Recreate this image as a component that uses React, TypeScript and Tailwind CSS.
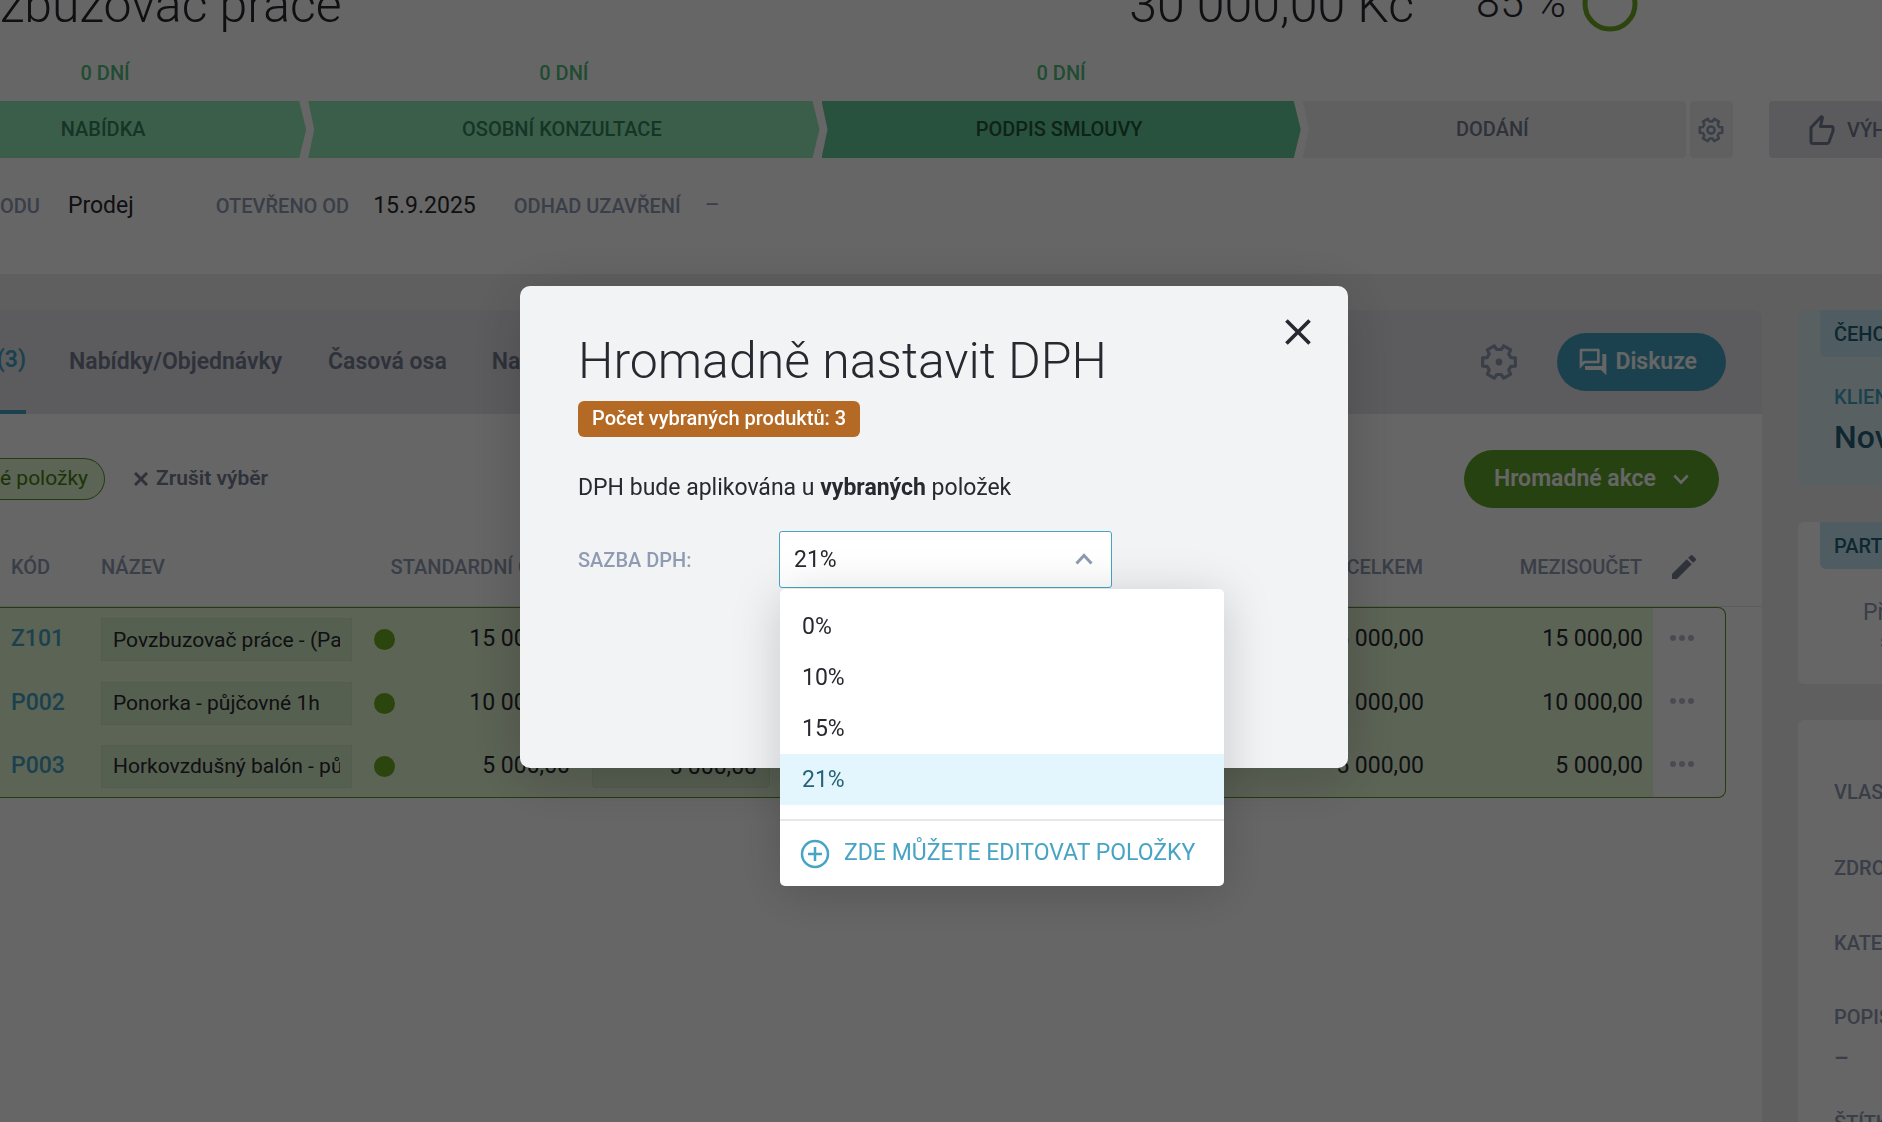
import { MdClose, MdEdit, MdOutlineForum } from "react-icons/md";
import { ReactNode } from "react";

type Product = { code: string; name: string; price: string };

const products: Product[] = [
  { code: "Z101", name: "Povzbuzovač práce - (Papír)", price: "15 000,00" },
  { code: "P002", name: "Ponorka - půjčovné 1h", price: "10 000,00" },
  { code: "P003", name: "Horkovzdušný balón - půjčovné", price: "5 000,00" },
];

const rates = ["0%", "10%", "15%", "21%"];

const gearPoints = [0, 60, 120, 180, 240, 300]
  .flatMap((tooth) =>
    [[12, -20], [16, -14], [16, 14], [12, 20]].map(([r, turn]) => {
      const a = ((tooth + turn) * Math.PI) / 180;
      return `${(18 + r * Math.cos(a)).toFixed(2)},${(18 + r * Math.sin(a)).toFixed(2)}`;
    }),
  )
  .join(" ");

function Gear({ className, dot }: { className: string; dot?: boolean }) {
  return (
    <svg viewBox="0 0 36 36" className={className} fill="none" stroke="currentColor" strokeWidth={dot ? 3 : 3.5} strokeLinejoin="round" aria-hidden="true">
      <polygon points={gearPoints} />
      {dot ? <circle cx="18" cy="18" r="3.2" fill="currentColor" stroke="none" /> : <circle cx="18" cy="18" r="5" />}
    </svg>
  );
}

function ThumbUp() {
  return (
    <svg viewBox="0 0 26 32" className="h-8 w-[26px] shrink-0" fill="none" stroke="currentColor" strokeWidth="3" strokeLinejoin="round" aria-hidden="true">
      <path d="M2 13.500 12.500 2.500l1 1-2 9H22.500q1.500 0 1.500 1.500v3l-4 11q-.6 1.500-2 1.500H4q-2 0-2-2z" />
    </svg>
  );
}

function Chevron({ up, className }: { up?: boolean; className: string }) {
  return (
    <svg viewBox="0 0 18 12" className={className} fill="none" stroke="currentColor" strokeWidth="3" aria-hidden="true">
      <path d={up ? "M1.500 10.500 9 2.500l7.500 8" : "M1.500 1.500 9 9.500l7.500-8"} />
    </svg>
  );
}

function Header() {
  return (
    <header className="h-[274px] shrink-0 bg-white">
      <div className="-mt-9 flex h-[88px] items-start text-[#282830]">
        <h1 className="flex-1 pt-[7px] text-[50px] leading-[68px] font-light">zbuzovač práce</h1>
        <div className="flex items-start pr-[244px]">
          <span className="pt-[7px] text-[50px] leading-[68px] font-light">30 000,00 Kč</span>
          <span className="ml-[62px] pt-1 text-[43px] leading-[68px] font-light">85 %</span>
          <svg viewBox="0 0 56 56" className="mt-3 ml-4 size-14" fill="none" stroke="#6fab22" strokeWidth="5" aria-hidden="true">
            <circle cx="28" cy="28" r="25" />
          </svg>
        </div>
      </div>
      <nav className="-ml-24 flex" aria-label="Fáze">
        <Stage days="0 DNÍ" label="NABÍDKA" grow="grow-[402]" color="bg-[#93eabb] text-[#39845c]" shape="[clip-path:polygon(0_0,calc(100%-7px)_0,100%_50%,calc(100%-7px)_100%,0_100%)]" />
        <Stage days="0 DNÍ" label="OSOBNÍ KONZULTACE" grow="grow-[511]" color="bg-[#93eabb] text-[#39845c]" shape="[clip-path:polygon(0_0,calc(100%-7px)_0,100%_50%,calc(100%-7px)_100%,0_100%,6px_50%)]" />
        <Stage days="0 DNÍ" label="PODPIS SMLOUVY" grow="grow-[479]" color="bg-[#67cd9b] text-[#23573c]" shape="[clip-path:polygon(0_0,calc(100%-7px)_0,100%_50%,calc(100%-7px)_100%,0_100%,6px_50%)]" />
        <Stage label="DODÁNÍ" grow="grow-[383]" color="bg-[#f0f0f0] text-[#757d93] rounded-r" shape="[clip-path:polygon(0_0,100%_0,100%_100%,0_100%,6px_50%)]" />
        <button aria-label="Nastavení fází" className="mt-[49px] ml-[2px] flex h-[57px] w-[43px] items-center justify-center rounded bg-[#f0f0f0] text-[#8f9bb3]">
          <Gear className="size-[26px]" />
        </button>
        <button className="mt-[49px] ml-9 flex h-[57px] w-[113px] items-center gap-3 overflow-hidden rounded-l bg-[#e3e4ec] pl-10 text-xl font-medium whitespace-nowrap text-[#757d93]">
          <ThumbUp />
          VÝHRA
        </button>
      </nav>
      <dl className="flex items-center pt-8 leading-8">
        <dt className="text-xl font-medium text-[#8f9bb3]">ODU</dt>
        <dd className="ml-7 text-[23px] text-[#282830]">Prodej</dd>
        <dt className="ml-[82px] text-xl font-medium text-[#8f9bb3]">OTEVŘENO OD</dt>
        <dd className="ml-6 text-[23px] text-[#282830]">15.9.2025</dd>
        <dt className="ml-[38px] text-xl font-medium text-[#8f9bb3]">ODHAD UZAVŘENÍ</dt>
        <dd className="ml-6 text-[23px] text-[#8f9bb3]">–</dd>
      </dl>
    </header>
  );
}

function Stage({ days, label, grow, color, shape }: { days?: string; label: string; grow: string; color: string; shape: string }) {
  return (
    <div className={`mr-[2px] flex basis-0 flex-col text-center text-xl font-medium ${grow}`}>
      <span className="h-[49px] pt-[7px] leading-7 text-[#52bd80]">{days}</span>
      <button className={`h-[57px] pr-1 pb-0.5 ${color} ${shape}`}>{label}</button>
    </div>
  );
}

function Tabs() {
  return (
    <div className="flex h-[104px] items-center rounded-tr-md bg-[#e6e6ec] pr-9 text-[23px] font-semibold text-[#757d93]">
      <a href="#produkty" className="flex h-full w-[26px] items-center justify-end border-b-4 border-[#47a4c4] text-[#47a4c4]">(3)</a>
      <a href="#nabidky" className="ml-[43px]">Nabídky/Objednávky</a>
      <a href="#osa" className="ml-[46px]">Časová osa</a>
      <a href="#nastaveni" className="ml-[45px]">Nastavení</a>
      <button aria-label="Nastavení" className="ml-auto text-[#8f9bb3]">
        <Gear className="size-[38px]" dot />
      </button>
      <button className="ml-[39px] flex h-[58px] items-center gap-1.5 rounded-full bg-[#47a4c4] pr-[29px] pl-5 text-white">
        <MdOutlineForum className="size-8" />
        Diskuze
      </button>
    </div>
  );
}

function Products() {
  return (
    <table className="mt-6 w-full table-fixed border-separate border-spacing-0 text-[23px] text-[#282830]">
      <colgroup>
        <col className="w-[101px]" />
        <col className="w-[251px]" />
        <col className="w-[68px]" />
        <col className="w-[161px]" />
        <col className="w-[200px]" />
        <col />
        <col className="w-[219px]" />
        <col className="w-[73px]" />
        <col className="w-[36px]" />
      </colgroup>
      <thead>
        <tr className="h-[75px] text-left text-xl text-[#8f9bb3] [&>th]:border-b [&>th]:border-[#e6e6ec] [&>th]:p-0 [&>th]:pb-1 [&>th]:font-medium">
          <th className="pl-[11px]!">KÓD</th>
          <th>NÁZEV</th>
          <th colSpan={2} className="pr-[11px]! text-right">STANDARDNÍ CENA</th>
          <th />
          <th className="pr-[11px]! text-right">CELKEM</th>
          <th className="pr-[11px]! text-right">MEZISOUČET</th>
          <th className="pl-[15px]! text-[#757d93]">
            <button aria-label="Upravit sloupce" className="block"><MdEdit className="size-8" /></button>
          </th>
          <th />
        </tr>
      </thead>
      <tbody>
        {products.map((p, i) => {
          const edge = i === 0 ? "border-t border-[#5a9628]" : i === products.length - 1 ? "border-b border-[#5a9628]" : "border-[#5a9628]";
          const corner = i === 0 ? "rounded-tr-lg" : i === products.length - 1 ? "rounded-br-lg" : "";
          return (
            <tr key={p.code} className="h-16 last:h-[63px] [&>td]:p-0">
              <td className={`bg-[#e6f9d7] pl-[11px]! font-medium text-[#47a4c4] ${edge}`}>
                <a href={`#${p.code}`}>{p.code}</a>
              </td>
              <td className={`bg-[#e6f9d7] ${edge}`}>
                <input aria-label={`Název ${p.code}`} defaultValue={p.name} className="block h-[43px] w-full border border-[#cfe6c4] bg-[#d6efc8] px-[11px] text-[21px]" />
              </td>
              <td className={`bg-[#e6f9d7] pl-[22px]! ${edge}`}>
                <span className="block size-[21px] rounded-full bg-[#6fab22]" />
              </td>
              <td className={`bg-[#e6f9d7] pr-[11px]! text-right ${edge}`}>{p.price}</td>
              <td className={`bg-[#e6f9d7] px-[11px]! ${edge}`}>
                <input aria-label={`Cena ${p.code}`} defaultValue={p.price} className="block h-[43px] w-full rounded-sm border border-[#cfe6c4] bg-[#d6efc8] px-3 text-right" />
              </td>
              <td className={`bg-[#e6f9d7] pr-2.5! text-right ${edge}`}>{p.price}</td>
              <td className={`bg-[#e6f9d7] pr-2.5! text-right ${edge}`}>{p.price}</td>
              <td className={`border-r pl-[17px]! ${edge} ${corner}`}>
                <button aria-label={`Akce ${p.code}`} className="flex gap-[3px] pb-1">
                  <Dot /><Dot /><Dot />
                </button>
              </td>
              <td />
            </tr>
          );
        })}
      </tbody>
    </table>
  );
}

function Dot() {
  return <span className="size-1.5 rounded-full bg-[#b9bccb]" />;
}

function Badge({ children }: { children: ReactNode }) {
  return (
    <h2 className="ml-[22px] flex h-[47px] items-center rounded-bl-md bg-[#c6e8f4] pl-3.5 text-xl font-medium text-[#266378]">{children}</h2>
  );
}

function Sidebar() {
  return (
    <aside className="flex w-[84px] shrink-0 flex-col gap-9 overflow-hidden whitespace-nowrap">
      <section className="h-[176px] rounded-l-md bg-[#dff0f6]">
        <Badge>ČEHO</Badge>
        <p className="pt-[26px] pl-9 text-xl leading-7 font-medium text-[#47a4c4]">KLIEN</p>
        <p className="pt-2.5 pl-9 text-[32px] leading-8 font-medium text-[#266378]">Nov</p>
      </section>
      <section className="h-[162px] rounded-l-md bg-white text-[#8f9bb3]">
        <Badge>PART</Badge>
        <p className="pt-7 pl-[65px] text-[23px] leading-8">Při</p>
        <p className="pl-[82px] text-xl leading-6">s</p>
      </section>
      <section className="flex-1 rounded-tl-md bg-white pt-[58px] pl-9 text-xl leading-7 font-medium text-[#8f9bb3]">
        <p className="h-[76px]">VLAS</p>
        <p className="h-[75px]">ZDRO</p>
        <p className="h-[74px]">KATE</p>
        <p className="h-[42px]">POPIS</p>
        <p className="h-16 text-[23px]">–</p>
        <p>ŠTÍTK</p>
      </section>
    </aside>
  );
}

function VatDialog() {
  return (
    <section role="dialog" aria-modal="true" aria-labelledby="vat-title" className="relative h-[482px] w-[828px] rounded-[10px] bg-[#f2f3f5] px-[58px] pt-11 text-[23px] text-[#282830] shadow-[0_8px_60px_rgba(0,0,0,0.2)]">
      <button aria-label="Zavřít" className="absolute top-6 right-[28px]">
        <MdClose className="size-11" />
      </button>
      <h2 id="vat-title" className="text-[50px] leading-[62px] font-light">Hromadně nastavit DPH</h2>
      <p className="mt-[9px] flex h-9 w-fit items-center rounded-md bg-[#b46a25] px-3.5 pb-0.5 text-xl font-medium text-white">Počet vybraných produktů: 3</p>
      <p className="mt-[35px] leading-8">DPH bude aplikována u <b>vybraných</b> položek</p>
      <div className="mt-[27px] flex items-center">
        <label htmlFor="vat-rate" className="w-[201px] text-xl font-medium text-[#8f9bb3]">SAZBA DPH:</label>
        <div className="relative w-[333px]">
          <select id="vat-rate" defaultValue="21%" className="block h-[57px] w-full appearance-none rounded-[3px] border border-[#47a4c4] bg-white pt-0.5 pl-3.5">
            {rates.map((r) => <option key={r}>{r}</option>)}
          </select>
          <Chevron up className="pointer-events-none absolute top-[22px] right-[19px] h-3 w-[18px] text-[#8f9bb3]" />
          <div className="absolute top-[58px] left-px w-[444px] rounded-[5px] bg-white pt-3 shadow-[0_8px_50px_rgba(0,0,0,0.18)]">
            <ul role="listbox" aria-label="Sazba DPH" className="pb-3.5">
              {rates.map((r) => (
                <li key={r} role="option" aria-selected={r === "21%"} className="flex h-[51px] items-center px-[22px] pt-0.5 aria-selected:bg-[#e4f6fd] aria-selected:text-[#266378]">{r}</li>
              ))}
            </ul>
            <button className="flex h-[67px] w-full items-center gap-3.5 border-t-2 border-[#e6e8ec] pl-5 whitespace-nowrap text-[#47a4c4]">
              <svg viewBox="0 0 30 30" className="size-[30px]" fill="none" stroke="currentColor" strokeWidth="2.500" aria-hidden="true">
                <circle cx="15" cy="15" r="13" />
                <path d="M15 8v14M8 15h14" />
              </svg>
              ZDE MŮŽETE EDITOVAT POLOŽKY
            </button>
          </div>
        </div>
      </div>
    </section>
  );
}

export default function App() {
  return (
    <div className="flex h-screen flex-col overflow-hidden bg-[#eeeeee] font-[Roboto,sans-serif]">
      <Header />
      <div className="flex flex-1 gap-9 pt-9">
        <main className="min-w-0 flex-1 rounded-tr-md bg-white">
          <Tabs />
          <div className="flex items-center pt-9 pr-[43px] text-[21px]">
            <span className="flex h-[42px] items-center rounded-r-full border border-l-0 border-[#5a9628] bg-[#e6f9d7] pr-4 text-[#478010]">é položky</span>
            <button className="ml-[29px] flex items-center gap-2 font-semibold text-[#757d93]">
              <svg viewBox="0 0 14 14" className="size-3.5" fill="none" stroke="currentColor" strokeWidth="3" aria-hidden="true">
                <path d="M1 1l12 12M13 1L1 13" />
              </svg>
              Zrušit výběr
            </button>
            <button className="ml-auto flex h-[58px] items-center gap-[17px] rounded-full bg-[#5fa528] px-[30px] text-[23px] font-semibold text-white">
              Hromadné akce
              <Chevron className="h-[11px] w-4" />
            </button>
          </div>
          <Products />
        </main>
        <Sidebar />
      </div>
      <div className="fixed inset-0 flex items-start justify-center bg-black/60 pt-[286px] pr-3.5">
        <VatDialog />
      </div>
    </div>
  );
}
